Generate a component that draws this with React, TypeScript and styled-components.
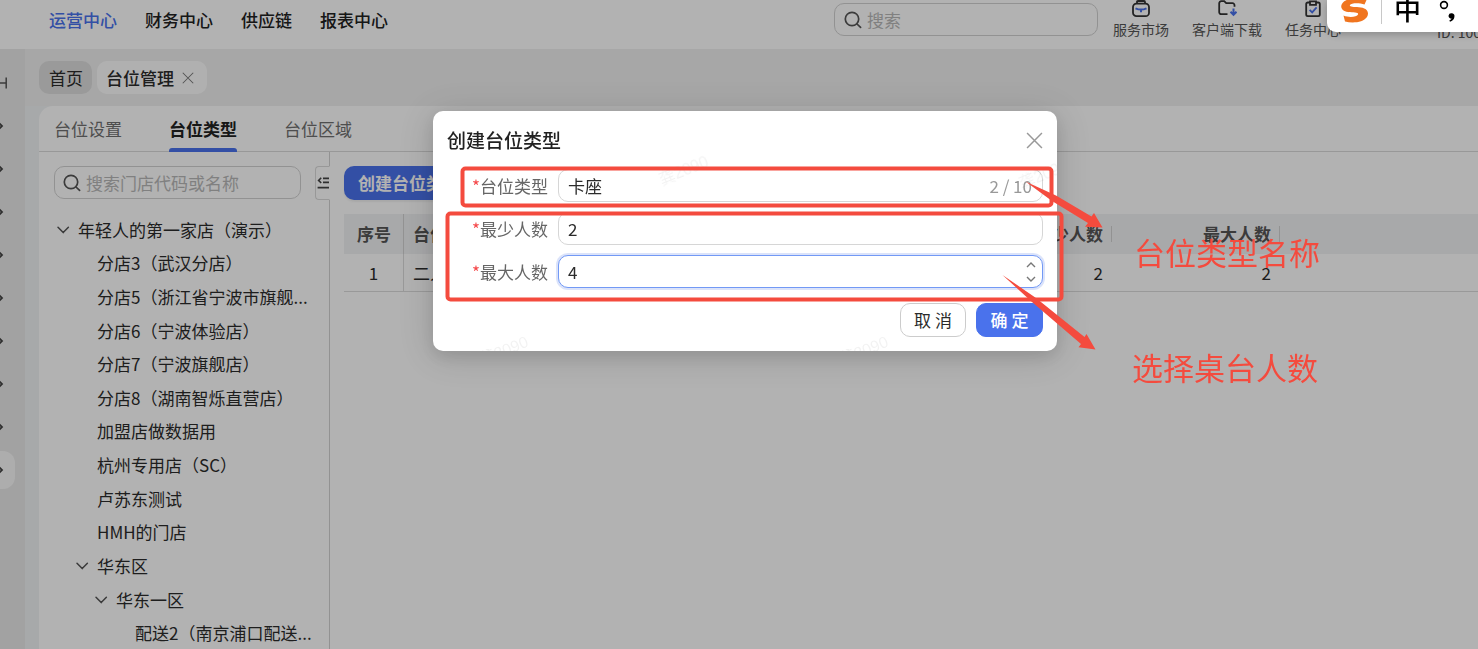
import React from 'react';
import styled, { createGlobalStyle } from 'styled-components';

const GlobalStyle = createGlobalStyle`
  *, *::before, *::after { box-sizing: border-box; }
  body { margin: 0; overflow: hidden; }
  body, button, input { font-family: "Noto Sans CJK SC", "Noto Sans", sans-serif; font-size: 17px; line-height: 24px; color: #2b2b2b; }
  button { margin: 0; padding: 0; border: 0; background: none; cursor: pointer; }
  a { color: inherit; text-decoration: none; }
  ul { margin: 0; padding: 0; list-style: none; }
  svg { display: block; flex: none; }
`;

const Page = styled.div`
  height: 100vh;
  display: flex;
  flex-direction: column;
  overflow: hidden;
  background: #f0f0f0;
`;

const Header = styled.header`
  height: 49px;
  flex: none;
  display: flex;
  align-items: flex-start;
  padding-left: 49px;
  background: #fff;
  overflow: hidden;
`;

const Nav = styled.nav`
  flex: 1;
  display: flex;
  gap: 28px;
  padding-top: 8px;
`;

const NavLink = styled.a<{ $active?: boolean }>`
  font-weight: 500;
  color: ${p => (p.$active ? '#4a72ec' : '#222')};
`;

const SearchBox = styled.label`
  height: 33px;
  display: flex;
  align-items: center;
  gap: 5px;
  padding: 0 9px;
  border: 1px solid #d2d2d2;
  border-radius: 10px;
  color: #555;
  background: #fff;
  input {
    flex: 1;
    min-width: 0;
    padding: 0;
    border: 0;
    outline: 0;
    background: none;
  }
  input::placeholder { color: #b8b8b8; opacity: 1; }
`;

const HeaderSearch = styled(SearchBox)`
  width: 264px;
  margin: 3px 14px 0 0;
`;

const Tools = styled.div`
  display: flex;
  gap: 21px;
`;

const Tool = styled.a<{ $wide?: boolean }>`
  width: ${p => (p.$wide ? 72 : 58)}px;
  display: flex;
  flex-direction: column;
  align-items: center;
  font-size: 14px;
  line-height: 20px;
  white-space: nowrap;
  color: #555;
  svg { margin-bottom: 1px; }
`;

const Account = styled.div`
  width: 41px;
  margin-left: 95px;
  padding-top: 22px;
  font-size: 14px;
  line-height: 20px;
  white-space: nowrap;
  color: #555;
`;

const Body = styled.div`
  flex: 1;
  min-height: 0;
  display: flex;
`;

const Rail = styled.aside`
  width: 25px;
  flex: none;
  display: flex;
  flex-direction: column;
  gap: 5px;
  padding-top: 15px;
  background: #e8e8e8;
  color: #555;
`;

const RailItem = styled.button<{ $active?: boolean }>`
  width: 15px;
  height: 38px;
  display: flex;
  align-items: center;
  color: #444;
  border-radius: 0 12px 12px 0;
  background: ${p => (p.$active ? '#f8f8f8' : 'none')};
`;

const Main = styled.main`
  flex: 1;
  min-width: 0;
  display: flex;
  flex-direction: column;
`;

const PageTabs = styled.div`
  height: 57px;
  flex: none;
  display: flex;
  align-items: flex-start;
  gap: 5px;
  padding: 12px 14px;
`;

const PageTab = styled.button<{ $active?: boolean }>`
  height: 33px;
  display: flex;
  align-items: center;
  gap: 8px;
  padding: ${p => (p.$active ? '0 13px 0 9px' : '0 9px 0 10px')};
  border-radius: 10px;
  font-weight: ${p => (p.$active ? 500 : 400)};
  background: ${p => (p.$active ? '#fdfdfd' : '#dddddd')};
`;

const CardWrap = styled.div`
  flex: 1;
  min-height: 0;
  display: flex;
  padding-left: 14px;
  background: #eff2f4;
`;

const Card = styled.section`
  flex: 1;
  min-width: 0;
  display: flex;
  flex-direction: column;
  border-radius: 14px 0 0 0;
  background: #fff;
  overflow: hidden;
`;

const TabList = styled.div`
  height: 46px;
  flex: none;
  display: flex;
  gap: 47px;
  padding-left: 15px;
  border-bottom: 1px solid #dadada;
`;

const Tab = styled.button<{ $active?: boolean }>`
  position: relative;
  height: 46px;
  color: ${p => (p.$active ? '#222' : '#707070')};
  font-weight: ${p => (p.$active ? 700 : 400)};
  &::after {
    content: '';
    display: ${p => (p.$active ? 'block' : 'none')};
    position: absolute;
    left: 0;
    right: 0;
    bottom: 0;
    height: 4px;
    border-radius: 3px 3px 0 0;
    background: #4a72ec;
  }
`;

const Columns = styled.div`
  flex: 1;
  min-height: 0;
  display: flex;
`;

const StorePanel = styled.div`
  width: 291px;
  flex: none;
  padding: 14px 0 0 15px;
  border-right: 1px solid #d2d2d2;
`;

const StoreTop = styled.div`
  display: flex;
  gap: 14px;
  margin-bottom: 13px;
`;

const StoreSearch = styled(SearchBox)`
  width: 247px;
  padding: 0 8px;
`;

const Collapse = styled.button`
  width: 15px;
  height: 34px;
  display: flex;
  align-items: center;
  padding-left: 1px;
  border: 1px solid #dadada;
  border-right-color: #fff;
  border-radius: 4px 0 0 4px;
  margin-right: -1px;
  background: #fff;
`;

const Tree = styled.ul`
  height: 437px;
  display: grid;
  grid-auto-rows: 1fr;
`;

const TreeRow = styled.li<{ $level: number }>`
  display: flex;
  align-items: center;
  padding-left: ${p => p.$level * 19}px;
  padding-right: 14px;
  white-space: nowrap;
`;

const Toggle = styled.span`
  width: 24px;
  flex: none;
  padding-left: 2px;
  color: #555;
`;

const Content = styled.div`
  flex: 1;
  min-width: 0;
  padding: 14px 0 0 14px;
`;

const PrimaryButton = styled.button`
  height: 34px;
  padding: 0 14px;
  border-radius: 10px;
  color: #fff;
  font-weight: 700;
  background: #4a72ec;
  box-shadow: 0 2px 2px rgba(0, 0, 0, 0.06);
`;

const Table = styled.table`
  width: 100%;
  margin-top: 14px;
  table-layout: fixed;
  border-collapse: separate;
  border-spacing: 0;
`;

const Th = styled.th<{ $align?: string; $line?: boolean }>`
  position: relative;
  height: 40px;
  padding: 0 9px;
  font-weight: 700;
  color: #555;
  text-align: ${p => p.$align || 'left'};
  background: #f1f2f4;
  &::after {
    content: '';
    display: ${p => (p.$line ? 'block' : 'none')};
    position: absolute;
    right: 0;
    top: 12px;
    width: 1px;
    height: 16px;
    background: #d2d2d2;
  }
  &:first-child::after { top: 0; height: 40px; }
`;

const Td = styled.td<{ $align?: string }>`
  height: 38px;
  padding: 0 9px;
  border-bottom: 1px solid #dcdcdc;
  text-align: ${p => p.$align || 'left'};
  &:first-child { border-right: 1px solid #dcdcdc; }
`;

const Mask = styled.div`
  position: fixed;
  inset: 0;
  display: flex;
  justify-content: center;
  align-items: flex-start;
  padding: 111px 0 0 12px;
  background: rgba(0, 0, 0, 0.3);
`;

const Dialog = styled.div`
  position: relative;
  width: 624px;
  flex: none;
  border-radius: 10px;
  background: #fff;
  box-shadow: 0 6px 16px rgba(0, 0, 0, 0.1), 0 4px 36px 6px rgba(0, 0, 0, 0.12);
`;

const DialogHead = styled.div`
  height: 58px;
  display: flex;
  align-items: center;
  justify-content: space-between;
  padding: 0 14px;
  h2 { margin: 0; font-size: 19px; line-height: 28px; font-weight: 500; color: #222; }
`;

const Fields = styled.form`
  display: flex;
  flex-direction: column;
  gap: 10px;
  padding: 0 14px;
`;

const Field = styled.div`
  height: 33px;
  display: flex;
  align-items: center;
  gap: 10px;
`;

const Label = styled.label`
  width: 101px;
  text-align: right;
  line-height: 22px;
  color: #666;
  &::before { content: '*'; color: #f5484a; }
`;

const InputBox = styled.div<{ $focus?: boolean }>`
  flex: 1;
  height: 33px;
  display: flex;
  align-items: center;
  gap: 6px;
  padding: 0 6px 0 9px;
  border: 1px solid ${p => (p.$focus ? '#7299f5' : '#d6d6d6')};
  border-radius: 10px;
  box-shadow: ${p => (p.$focus ? '0 0 0 2px #dbe3fa' : 'none')};
  background: #fff;
  input {
    flex: 1;
    min-width: 0;
    padding: 0;
    border: 0;
    outline: 0;
    background: none;
    appearance: textfield;
  }
  input::-webkit-inner-spin-button { display: none; }
`;

const Count = styled.span`
  padding-right: 4px;
  color: #999;
`;

const Steps = styled.div`
  display: flex;
  flex-direction: column;
  button { height: 12px; color: #777; }
`;

const DialogFoot = styled.div`
  display: flex;
  justify-content: flex-end;
  gap: 10px;
  padding: 15px 14px 14px;
`;

const FootButton = styled.button<{ $primary?: boolean }>`
  width: ${p => (p.$primary ? 67 : 66)}px;
  height: 34px;
  border: 1px solid ${p => (p.$primary ? '#4a72ec' : '#ccc')};
  border-radius: 10px;
  font-weight: ${p => (p.$primary ? 500 : 400)};
  color: ${p => (p.$primary ? '#fff' : '#2b2b2b')};
  background: ${p => (p.$primary ? '#4a72ec' : '#fff')};
`;

const Watermarks = styled.div`
  position: absolute;
  inset: 0;
  overflow: hidden;
  border-radius: 10px;
  pointer-events: none;
`;

const Watermark = styled.span<{ $x: number; $y: number }>`
  position: absolute;
  left: ${p => p.$x}px;
  top: ${p => p.$y}px;
  font-family: "Liberation Sans", "Noto Sans CJK SC", sans-serif;
  font-size: 16px;
  white-space: nowrap;
  color: rgba(0, 0, 0, 0.05);
  transform: rotate(-22deg);
`;

const Marks = styled.svg`
  position: absolute;
  left: 0;
  top: 0;
  overflow: visible;
  pointer-events: none;
`;

const Note = styled.div<{ $x: number; $y: number }>`
  position: absolute;
  left: ${p => p.$x}px;
  top: ${p => p.$y}px;
  font-size: 31px;
  line-height: 40px;
  white-space: nowrap;
  color: #f44b3e;
`;

const ImeBar = styled.div`
  position: fixed;
  top: 0;
  right: 0;
  width: 151px;
  height: 32px;
  display: flex;
  align-items: flex-start;
  padding-left: 13px;
  border-radius: 0 0 0 9px;
  background: #fff;
  box-shadow: 0 2px 8px rgba(0, 0, 0, 0.25);
  overflow: hidden;
`;

const ImeDivider = styled.span`
  width: 1px;
  height: 24px;
  margin: 0 12px;
  background: #c8c8c8;
`;

const ImeMode = styled.span`
  width: 28px;
  height: 24px;
  margin-right: 17px;
  font-size: 27px;
  line-height: 18px;
  font-weight: 500;
  color: #000;
`;

const SearchIcon = () => (
  <svg width="18" height="18" viewBox="0 0 18 18" fill="none" stroke="currentColor" strokeWidth="1.7" strokeLinecap="round">
    <circle cx="8" cy="8" r="6.7" />
    <path d="M13 13l3.6 3.4" />
  </svg>
);

const ChevronDown = () => (
  <svg width="14" height="14" viewBox="0 0 14 14" fill="none" stroke="currentColor" strokeWidth="1.5" strokeLinecap="round" strokeLinejoin="round">
    <path d="M2 4.2l5.2 5.4 5.2-5.4" />
  </svg>
);

const Cross = ({ size, color }: { size: number; color: string }) => (
  <svg width={size} height={size} viewBox="0 0 16 16" fill="none" stroke={color} strokeWidth="1.4">
    <path d="M1 1l14 14M15 1L1 15" />
  </svg>
);

const stores = [
  { name: '年轻人的第一家店（演示）', level: 0, open: true },
  { name: '分店3（武汉分店）', level: 1 },
  { name: '分店5（浙江省宁波市旗舰...', level: 1 },
  { name: '分店6（宁波体验店）', level: 1 },
  { name: '分店7（宁波旗舰店）', level: 1 },
  { name: '分店8（湖南智烁直营店）', level: 1 },
  { name: '加盟店做数据用', level: 1 },
  { name: '杭州专用店（SC）', level: 1 },
  { name: '卢苏东测试', level: 1 },
  { name: 'HMH的门店', level: 1 },
  { name: '华东区', level: 1, open: true },
  { name: '华东一区', level: 2, open: true },
  { name: '配送2（南京浦口配送...', level: 3 },
];

export default function App() {
  return (
    <>
      <GlobalStyle />
      <Page>
        <Header>
          <Nav>
            <NavLink href="#" $active>运营中心</NavLink>
            <NavLink href="#">财务中心</NavLink>
            <NavLink href="#">供应链</NavLink>
            <NavLink href="#">报表中心</NavLink>
          </Nav>
          <HeaderSearch>
            <SearchIcon />
            <input placeholder="搜索" aria-label="搜索" />
          </HeaderSearch>
          <Tools>
            <Tool href="#">
              <svg width="20" height="18" viewBox="0 0 20 18" fill="none" stroke="#333" strokeWidth="1.8">
                <rect x="2" y="3.6" width="16" height="12.6" rx="3.5" />
                <path d="M6 3.4V1.900q0-.9.9-.9h6.200q.9 0 .9.900v1.500" />
                <path d="M4.500 8.300q5.500 2.600 11 0M10 9.600v2.600" stroke="#4a72ec" strokeWidth="2" />
              </svg>
              服务市场
            </Tool>
            <Tool href="#" $wide>
              <svg width="20" height="18" viewBox="0 0 20 18" fill="none" stroke="#333" strokeWidth="1.8">
                <path d="M10.5 14.2H4.200a2 2 0 0 1-2-2V3.200a2 2 0 0 1 2-2h3l2 2h6.300a2 2 0 0 1 2 2v1.500" />
                <path d="M16.500 8.500v6M13.500 11.800l3 3 3-3" stroke="#4a72ec" strokeWidth="2" />
              </svg>
              客户端下载
            </Tool>
            <Tool href="#">
              <svg width="18" height="18" viewBox="0 0 18 18" fill="none" stroke="#333" strokeWidth="1.8">
                <rect x="2.2" y="2.5" width="13.6" height="13.6" rx="1.6" />
                <path d="M6 1.400h6v3.400H6z" fill="#fff" />
                <path d="M5.600 9.800l2.600 2.600 4.400-5" stroke="#4a72ec" />
              </svg>
              任务中心
            </Tool>
          </Tools>
          <Account>ID: 100</Account>
        </Header>

        <Body>
          <Rail>
            <svg width="8" height="38" viewBox="0 0 8 38" fill="none" stroke="#555" strokeWidth="1.5">
              <path d="M0 19h6M6.2 13.5v11" />
            </svg>
            {[0, 1, 2, 3, 4, 5, 6, 7, 8].map(i => (
              <RailItem key={i} $active={i === 8} aria-label="展开菜单">
                <svg width="4" height="8" viewBox="0 0 4 8" fill="none" stroke="currentColor" strokeWidth="1.8">
                  <path d="M-1 1l3 3-3 3" />
                </svg>
              </RailItem>
            ))}
          </Rail>

          <Main>
            <PageTabs>
              <PageTab>首页</PageTab>
              <PageTab $active>
                台位管理
                <Cross size={12} color="#777" />
              </PageTab>
            </PageTabs>
            <CardWrap>
              <Card>
                <TabList role="tablist">
                  <Tab role="tab">台位设置</Tab>
                  <Tab role="tab" aria-selected $active>台位类型</Tab>
                  <Tab role="tab">台位区域</Tab>
                </TabList>
                <Columns>
                  <StorePanel>
                    <StoreTop>
                      <StoreSearch>
                        <SearchIcon />
                        <input placeholder="搜索门店代码或名称" aria-label="搜索门店" />
                      </StoreSearch>
                      <Collapse aria-label="收起">
                        <svg width="12" height="12" viewBox="0 0 12 12" fill="none" stroke="#444" strokeWidth="1.6">
                          <path d="M4.200 .8L1.600 3.400l2.600 2.600M6 1.400h6M6 5.400h6M.6 10.600H12" />
                        </svg>
                      </Collapse>
                    </StoreTop>
                    <Tree>
                      {stores.map(s => (
                        <TreeRow key={s.name} $level={s.level}>
                          <Toggle>{s.open && <ChevronDown />}</Toggle>
                          {s.name}
                        </TreeRow>
                      ))}
                    </Tree>
                  </StorePanel>
                  <Content>
                    <PrimaryButton>创建台位类型</PrimaryButton>
                    <Table>
                      <colgroup>
                        <col style={{ width: 60 }} />
                        <col style={{ width: 540 }} />
                        <col style={{ width: 168 }} />
                        <col style={{ width: 168 }} />
                        <col />
                      </colgroup>
                      <thead>
                        <tr>
                          <Th $align="center" $line>序号</Th>
                          <Th>台位类型</Th>
                          <Th $align="right" $line>最少人数</Th>
                          <Th $align="right" $line>最大人数</Th>
                          <Th />
                        </tr>
                      </thead>
                      <tbody>
                        <tr>
                          <Td $align="center">1</Td>
                          <Td>二人桌</Td>
                          <Td $align="right">2</Td>
                          <Td $align="right">2</Td>
                          <Td />
                        </tr>
                      </tbody>
                    </Table>
                  </Content>
                </Columns>
              </Card>
            </CardWrap>
          </Main>
        </Body>
      </Page>

      <Mask>
        <Dialog role="dialog" aria-labelledby="dialog-title">
          <DialogHead>
            <h2 id="dialog-title">创建台位类型</h2>
            <button aria-label="关闭">
              <Cross size={17} color="#999" />
            </button>
          </DialogHead>
          <Fields>
            <Field>
              <Label htmlFor="type">台位类型</Label>
              <InputBox>
                <input id="type" defaultValue="卡座" />
                <Count>2 / 10</Count>
              </InputBox>
            </Field>
            <Field>
              <Label htmlFor="min">最少人数</Label>
              <InputBox>
                <input id="min" type="number" defaultValue="2" />
              </InputBox>
            </Field>
            <Field>
              <Label htmlFor="max">最大人数</Label>
              <InputBox $focus>
                <input id="max" type="number" defaultValue="4" />
                <Steps>
                  <button type="button" aria-label="增加">
                    <svg width="10" height="10" viewBox="0 0 10 10" fill="none" stroke="currentColor" strokeWidth="1.4">
                      <path d="M1 6l4-4 4 4" />
                    </svg>
                  </button>
                  <button type="button" aria-label="减少">
                    <svg width="10" height="10" viewBox="0 0 10 10" fill="none" stroke="currentColor" strokeWidth="1.4">
                      <path d="M1 4l4 4 4-4" />
                    </svg>
                  </button>
                </Steps>
              </InputBox>
            </Field>
          </Fields>
          <DialogFoot>
            <FootButton>取 消</FootButton>
            <FootButton $primary>确 定</FootButton>
          </DialogFoot>

          <Watermarks aria-hidden>
            <Watermark $x={225} $y={48}>龚2090</Watermark>
            <Watermark $x={585} $y={52}>龚2090</Watermark>
            <Watermark $x={45} $y={228}>龚2090</Watermark>
            <Watermark $x={405} $y={228}>龚2090</Watermark>
          </Watermarks>

          <Marks width="624" height="240" viewBox="433 111 624 240" fill="none" aria-hidden>
            <g stroke="#f44b3e" strokeWidth="4">
              <rect x="462.5" y="168.5" width="589" height="37" rx="3" />
              <rect x="447.5" y="213.5" width="614" height="86" rx="3" />
            </g>
            <g fill="#f44b3e">
              <path d="M1025.500 181.500L1056 195.500L1091.500 216.500L1094 213L1102.500 227.500L1085 226.700L1088 223L1052 201Z" />
              <path d="M1002.500 275L1036 298L1084.500 337L1086.500 334L1095.500 349.500L1078.500 347.300L1081 344L1032 302Z" />
            </g>
          </Marks>
          <Note $x={701} $y={121}>台位类型名称</Note>
          <Note $x={699} $y={236}>选择桌台人数</Note>
        </Dialog>
      </Mask>

      <ImeBar>
        <svg width="29" height="24" viewBox="0 0 29 24">
          <path d="M26.5 0C21 -2 9 -2.5 4 1.5C-1 6 1 11 8 12C14 12.800 19 12 18 14.500C17 17 9 18 3.500 15.500L5 21.500C13 23.500 23 22.500 27 17C30 11.500 26 7.500 19 7.200C13 7 9 7 10 5C11 3 19 2.500 24.500 4.500Z" fill="#f0751f" />
        </svg>
        <ImeDivider />
        <ImeMode>中</ImeMode>
        <svg width="20" height="24" viewBox="0 0 20 24">
          <circle cx="5" cy="5" r="3.400" fill="none" stroke="#000" strokeWidth="1.600" />
          <path d="M9.500 15.700a3 3 0 1 1 5.900 1.200c-.3 2.400-2 4-4.400 4.800l-.7-1.200c1.300-.6 2-1.200 2.200-2a3 3 0 0 1-3-2.800z" fill="#000" />
        </svg>
      </ImeBar>
    </>
  );
}
